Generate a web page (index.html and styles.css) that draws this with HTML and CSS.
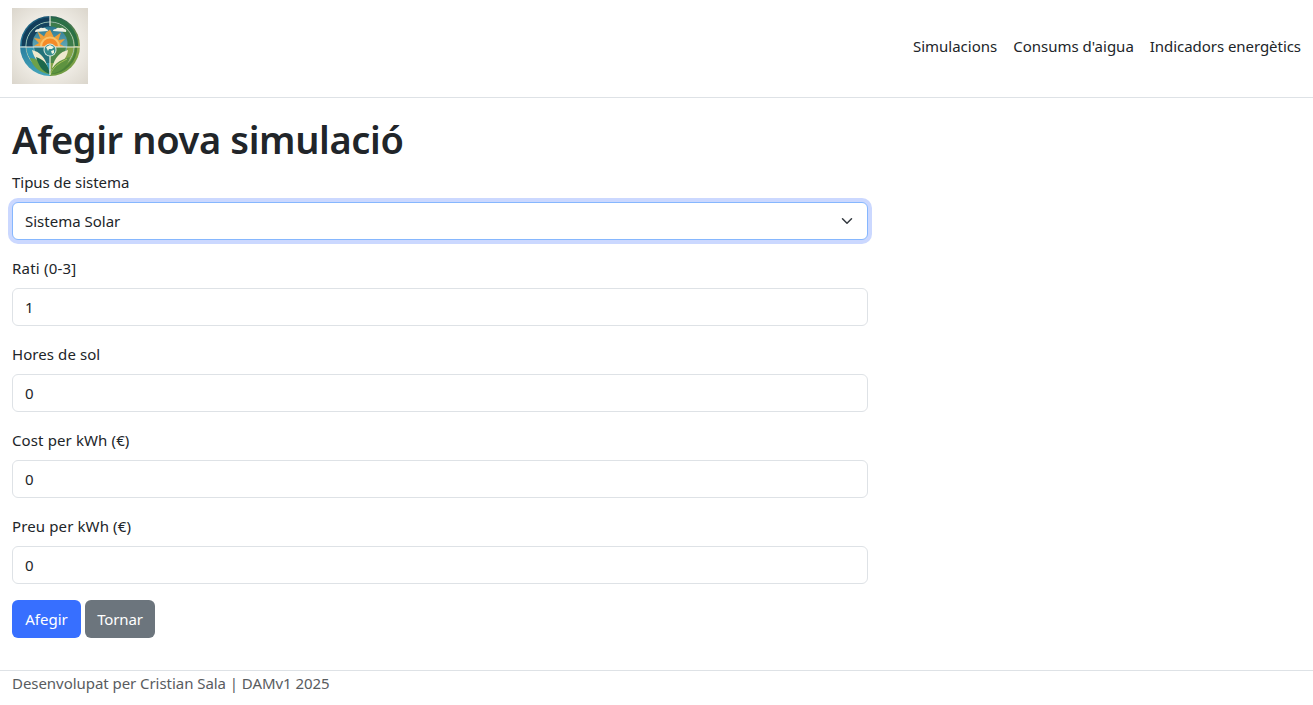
FILE: index.html
```
<!DOCTYPE html>
<html lang="ca">
<head>
<meta charset="utf-8">
<title>Afegir nova simulació</title>
<link rel="stylesheet" href="styles.css">
</head>
<body>
<header class="topbar">
  <a class="brand" href="#">
    <svg class="logo" viewBox="0 0 76 76" aria-label="Logotip">
      <defs>
        <radialGradient id="paper" r=".72"><stop offset=".5" stop-color="#f0ede6"/><stop offset="1" stop-color="#dad5cb"/></radialGradient>
        <linearGradient id="teal" x1="0" y1="0" x2="0" y2="1"><stop offset="0" stop-color="#1b5674"/><stop offset=".5" stop-color="#287d9e"/><stop offset="1" stop-color="#45a5bb"/></linearGradient>
        <linearGradient id="green" x1="0" y1="0" x2="0" y2="1"><stop offset="0" stop-color="#235f4e"/><stop offset=".5" stop-color="#8aa64a"/><stop offset="1" stop-color="#6d9a42"/></linearGradient>
        <linearGradient id="sky" x1="0" y1="0" x2="0" y2="1"><stop offset="0" stop-color="#297791"/><stop offset="1" stop-color="#8bc9cf"/></linearGradient>
        <clipPath id="disc"><circle cx="38" cy="38" r="23.500"/></clipPath>
      </defs>
      <rect width="76" height="76" fill="url(#paper)"/>
      <path d="M38 8a30 30 0 0 0 0 60z" fill="url(#teal)"/>
      <path d="M38 8a30 30 0 0 1 0 60z" fill="url(#green)"/>
      <path d="M11.500 38a26.500 26.500 0 0 1 26.500-26.500" fill="none" stroke="#123d5a" stroke-width="4"/>
      <path d="M38 11.500a26.500 26.500 0 0 1 26.500 26.500" fill="none" stroke="#2a7046" stroke-width="3.500"/>
      <path d="M64 39a26 26 0 0 1-26 26" fill="none" stroke="#4a8238" stroke-width="2.500"/>
      <circle cx="38" cy="38" r="24" fill="none" stroke="#a4c5b3" stroke-width="1"/>
      <g clip-path="url(#disc)">
        <path d="M14 14h24v25H14z" fill="#16435f"/>
        <path d="M38 14h24v25H38z" fill="#3c7c4a"/>
        <path d="M14 39h24v23H14z" fill="#3197b2"/>
        <path d="M38 39h24v23H38z" fill="#84a347"/>
        <circle cx="38" cy="36" r="17.500" fill="url(#sky)"/>
        <path d="M22 39h16v16H26z" fill="#23727a"/>
        <path d="M38 39h16l-3 16H38z" fill="#4c8747"/>
      </g>
      <path d="M22 38l5-3-5-5 6.500 1-3-7.500 6.500 5 2-4 4-3 2 4 2 4 7-5-2.500 7.500 6.500-1-5 5 5 3z" fill="#efa03a"/>
      <path d="M28 38.500a10 10 0 0 1 20 0z" fill="#f9c36a"/>
      <path d="M30 38.500a8 8 0 0 1 16 0z" fill="#f58b28"/>
      <path d="M23 24q0-3 4-3 1-2 4-1 2-1 3 1 2 0 2 2zM41 23q0-2 3-2 1-2 4-1 3-1 4 1 3 0 2 3z" fill="#eef0e2"/>
      <path d="M20 42c8 2 13 7 16 18-9-4-14-9-16-18zM56 42c-8 2-13 7-16 18 9-4 15-9 16-18z" fill="#eee9cc"/>
      <path d="M18 50c10 1 17 7 20 16-11-1-17-7-20-16z" fill="#6da14a"/>
      <path d="M24 49c9 3 13 9 13.500 17-8-3-11-9-13.500-17z" fill="#1c684b"/>
      <path d="M58 49c-11 3-18 8-19.500 17 12-2 17-8 19.500-17z" fill="#5e9340"/>
      <path d="M55 51c-8 4-14 8-16.500 15" fill="none" stroke="#a4bd55"/>
      <path d="M8 39h60M38 8v10M38 47v20" stroke="#f0eee2" stroke-width="1.200"/>
      <circle cx="38" cy="42" r="6.500" fill="#dce9df"/>
      <circle cx="38" cy="42" r="5.500" fill="#348a8d"/>
      <path d="M34 39l4-2 4 2-2 2h-3l-1 2zM39 43l3-1v3l-2 1z" fill="#eff3df"/>
    </svg>
  </a>
  <nav class="nav">
    <a class="nav-a" href="#">Simulacions</a>
    <a class="nav-b" href="#">Consums d'aigua</a>
    <a class="nav-c" href="#">Indicadors energètics</a>
  </nav>
</header>
<main class="content">
  <h1 class="title">Afegir nova simulació</h1>
  <form class="form">
    <div class="field">
      <label class="label-type" for="tipus">Tipus de sistema</label>
      <div class="control select" id="tipus" tabindex="0"><span>Sistema Solar</span>
        <svg class="chevron" viewBox="0 0 16 16"><path d="m2 5 6 6 6-6" fill="none" stroke="#343a40" stroke-width="2" stroke-linecap="round" stroke-linejoin="round"/></svg>
      </div>
    </div>
    <div class="field"><label class="label-ratio" for="rati">Rati (0-3]</label><input class="control" id="rati" value="1"></div>
    <div class="field"><label class="label-hours" for="hores">Hores de sol</label><input class="control" id="hores" value="0"></div>
    <div class="field"><label class="label-price" for="cost">Cost per kWh (€)</label><input class="control" id="cost" value="0"></div>
    <div class="field"><label class="label-price" for="preu">Preu per kWh (€)</label><input class="control" id="preu" value="0"></div>
    <div class="actions">
      <button class="btn primary" type="button">Afegir</button>
      <button class="btn secondary" type="button">Tornar</button>
    </div>
  </form>
</main>
<footer class="footer">Desenvolupat per Cristian Sala | DAMv1 2025</footer>
</body>
</html>
```
FILE: styles.css
```
* { box-sizing: border-box; }
body {
  margin: 0;
  background: #fff;
  color: #212529;
  font: 15px/24px "Noto Sans", "Open Sans", sans-serif;
}
.topbar {
  display: flex;
  align-items: flex-start;
  justify-content: space-between;
  height: 98px;
  padding: 8px 12px;
  border-bottom: 1px solid #dee2e6;
}
.logo { display: block; width: 76px; height: 76px; }
.nav { display: flex; gap: 16px; padding-top: 26px; }
.nav a { color: #212529; text-decoration: none; white-space: nowrap; }
.nav-c { letter-spacing: -0.05px; }
.content { padding: 16px 12px 0; }
.title {
  margin: 0 0 8px;
  padding-top: 1px;
  height: 48px;
  font-size: 38px;
  line-height: 48px;
  font-weight: 600;
  letter-spacing: -0.36px;
  white-space: nowrap;
}
.form { width: 856px; }
.field { margin-bottom: 16px; }
.field label { display: block; width: max-content; margin-bottom: 8px; }
.field .label-type { letter-spacing: -0.04px; }
.field .label-ratio { letter-spacing: 0.2px; }
.field .label-hours { letter-spacing: 0.08px; }
.field .label-price { letter-spacing: 0.12px; }
.control {
  display: block;
  width: 100%;
  height: 38px;
  padding: 6px 12px;
  border: 1px solid #dee2e6;
  border-radius: 6px;
  background: #fff;
  color: #212529;
  font: inherit;
}
.select {
  display: flex;
  align-items: center;
  justify-content: space-between;
  border-color: #86b7fe;
  outline: 0;
  box-shadow: 0 0 0 4px #cbd8ff;
}
.chevron { width: 16px; height: 12px; }
.actions { display: flex; gap: 4px; }
.btn {
  height: 38px;
  padding: 0;
  border: 0;
  border-radius: 6px;
  color: #fff;
  font: inherit;
}
.primary { width: 69px; background: #376fff; }
.secondary { width: 70px; background: #6c757d; letter-spacing: -0.15px; }
.footer {
  margin-top: 32px;
  padding: 0 12px;
  border-top: 1px solid #dee2e6;
  color: #595c5f;
  letter-spacing: -0.05px;
}
```
